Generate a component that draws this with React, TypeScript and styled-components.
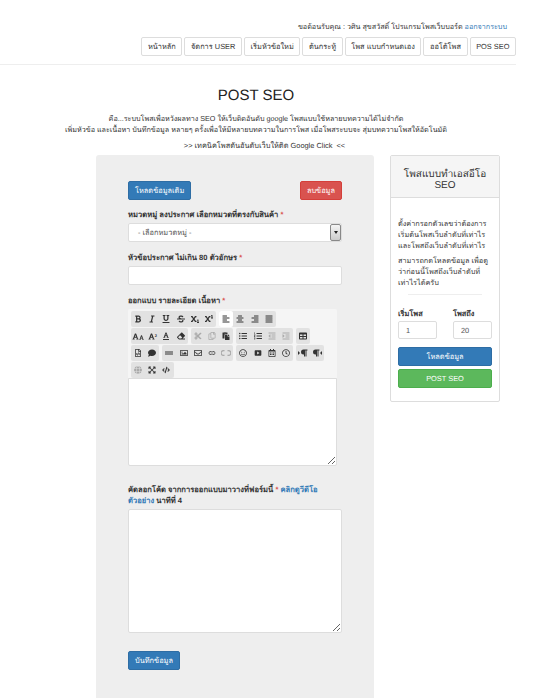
import React from 'react';
import styled, { createGlobalStyle } from 'styled-components';
import {
  FaAlignCenter,
  FaAlignJustify,
  FaAlignLeft,
  FaAlignRight,
  FaBold,
  FaCode,
  FaComment,
  FaCut,
  FaEraser,
  FaExpandArrowsAlt,
  FaFont,
  FaGlobe,
  FaGripLines,
  FaIndent,
  FaItalic,
  FaListOl,
  FaListUl,
  FaOutdent,
  FaParagraph,
  FaPaste,
  FaRegCalendarAlt,
  FaRegClock,
  FaRegCopy,
  FaRegEnvelope,
  FaRegFileCode,
  FaRegImage,
  FaRegSmile,
  FaStrikethrough,
  FaSubscript,
  FaSuperscript,
  FaTable,
  FaUnderline,
} from 'react-icons/fa';
import { MdLink, MdSmartDisplay } from 'react-icons/md';

const GlobalStyle = createGlobalStyle`
  html, body {
    margin: 0;
    height: 698px;
    overflow: hidden;
    background: #fff;
  }
  body {
    font-family: "Liberation Sans", "Noto Sans", sans-serif;
    font-size: 7.4px;
    line-height: 11px;
    color: #333;
  }
  * {
    text-rendering: geometricPrecision;
  }
`;

const FontSizeIcon = () => (
  <IconPair>
    <FaFont size={7} />
    <FaFont size={5} />
  </IconPair>
);

const FontRaiseIcon = () => (
  <IconPair>
    <FaFont size={7} />
    <RaisedDigit>2</RaisedDigit>
  </IconPair>
);

const FontColorIcon = () => (
  <UnderlinedIcon>
    <FaFont size={6} />
  </UnderlinedIcon>
);

const LtrIcon = () => (
  <IconPair>
    <Caret $dir="right" />
    <FaParagraph size={8} />
  </IconPair>
);

const RtlIcon = () => (
  <IconPair>
    <FaParagraph size={8} />
    <Caret $dir="left" />
  </IconPair>
);

const UnlinkIcon = () => (
  <svg width="10" height="6" viewBox="0 0 10 6" fill="none" stroke="currentColor" strokeWidth="1.1">
    <path d="M3.5 .6H2.6a2.4 2.4 0 0 0 0 4.8h.9M6.5 .6h.9a2.4 2.4 0 0 1 0 4.8h-.9" />
  </svg>
);

type Tool = { icon: React.ComponentType; off?: boolean; active?: boolean };

const NAV_ITEMS = ['หน้าหลัก', 'จัดการ USER', 'เริ่มหัวข้อใหม่', 'ต้นกระทู้', 'โพส แบบกำหนดเอง', 'ออโต้โพส', 'POS SEO'];

const TOOL_ROWS: Tool[][][] = [
  [
    [{ icon: FaBold }, { icon: FaItalic }, { icon: FaUnderline }, { icon: FaStrikethrough }, { icon: FaSubscript }, { icon: FaSuperscript }],
    [{ icon: FaAlignLeft, active: true }, { icon: FaAlignCenter }, { icon: FaAlignRight }, { icon: FaAlignJustify }],
  ],
  [
    [{ icon: FontSizeIcon }, { icon: FontRaiseIcon }, { icon: FontColorIcon }, { icon: FaEraser }],
    [{ icon: FaCut, off: true }, { icon: FaRegCopy, off: true }, { icon: FaPaste }],
    [{ icon: FaListUl }, { icon: FaListOl }, { icon: FaOutdent, off: true }, { icon: FaIndent, off: true }],
    [{ icon: FaTable }],
  ],
  [
    [{ icon: FaRegFileCode }, { icon: FaComment }],
    [{ icon: FaGripLines }, { icon: FaRegImage }, { icon: FaRegEnvelope }, { icon: MdLink }, { icon: UnlinkIcon, off: true }],
    [{ icon: FaRegSmile }, { icon: MdSmartDisplay }, { icon: FaRegCalendarAlt }, { icon: FaRegClock }],
    [{ icon: LtrIcon }, { icon: RtlIcon }],
  ],
  [[{ icon: FaGlobe, off: true }, { icon: FaExpandArrowsAlt }, { icon: FaCode }]],
];

export default function App() {
  return (
    <>
      <GlobalStyle />
      <Header>
        <Greeting>
          ขอต้อนรับคุณ : วศิน สุขสวัสดิ์ โปรแกรมโพสเว็บบอร์ด <Link>ออกจากระบบ</Link>
        </Greeting>
        <Nav>
          {NAV_ITEMS.map((item) => (
            <NavButton key={item}>{item}</NavButton>
          ))}
        </Nav>
      </Header>
      <Intro>
        <Title>POST SEO</Title>
        <Description>
          คือ...ระบบโพสเพื่อหวังผลทาง SEO ให้เว็บติดอันดับ google โพสแบบใช้หลายบทความได้ไม่จำกัด
          <br />
          เพิ่มหัวข้อ และเนื้อหา บันทึกข้อมูล หลายๆ ครั้งเพื่อให้มีหลายบทความในการโพส เมื่อโพสระบบจะ สุ่มบทความโพสให้อัตโนมัติ
        </Description>
        <Technique>&gt;&gt; เทคนิคโพสดันอันดับเว็บให้ติด Google Click &nbsp;&lt;&lt;</Technique>
      </Intro>
      <Main>
        <FormPanel>
          <TopActions>
            <Button $color="blue">โหลดข้อมูลเดิม</Button>
            <Button $color="red">ลบข้อมูล</Button>
          </TopActions>
          <Label $top={9}>
            หมวดหมู่ ลงประกาศ เลือกหมวดที่ตรงกับสินค้า <Required>*</Required>
          </Label>
          <SelectBox>
            <SelectText>- เลือกหมวดหมู่ -</SelectText>
            <SelectArrow />
          </SelectBox>
          <Label $top={10}>
            หัวข้อประกาศ ไม่เกิน 80 ตัวอักษร <Required>*</Required>
          </Label>
          <TextInput />
          <Label $top={10}>
            ออกแบบ รายละเอียด เนื้อหา <Required>*</Required>
          </Label>
          <Editor>
            <Toolbar>
              {TOOL_ROWS.map((row, rowIndex) => (
                <ToolRow key={rowIndex}>
                  {row.map((group, groupIndex) => (
                    <ToolGroupBox key={groupIndex}>
                      {group.map(({ icon: Icon, off, active }, toolIndex) => (
                        <ToolButton key={toolIndex} $off={off} $active={active}>
                          <Icon />
                        </ToolButton>
                      ))}
                    </ToolGroupBox>
                  ))}
                </ToolRow>
              ))}
            </Toolbar>
            <EditorArea />
          </Editor>
          <Label $top={18}>
            คัดลอกโค้ด จากการออกแบบมาวางที่ฟอร์มนี้ <Required>*</Required> <Link>คลิกดูวีดีโอตัวอย่าง</Link> นาทีที่ 4
          </Label>
          <CodeArea />
          <SaveRow>
            <Button $color="blue">บันทึกข้อมูล</Button>
          </SaveRow>
        </FormPanel>
        <SidePanel>
          <SideHeader>โพสแบบทำเอสอีโอ SEO</SideHeader>
          <SideBody>
            <SideText>ตั้งค่ากรอกตัวเลขว่าต้องการเริ่มต้นโพสเว็บลำดับที่เท่าไร และโพสถึงเว็บลำดับที่เท่าไร</SideText>
            <SideText>สามารถกดโหลดข้อมูล เพื่อดูว่าก่อนนี้โพสถึงเว็บลำดับที่เท่าไรได้ครับ</SideText>
            <SideRule />
            <RangeRow>
              <RangeField>
                <RangeLabel>เริ่มโพส</RangeLabel>
                <RangeInput defaultValue="1" />
              </RangeField>
              <RangeField>
                <RangeLabel>โพสถึง</RangeLabel>
                <RangeInput defaultValue="20" />
              </RangeField>
            </RangeRow>
            <SideButtons>
              <Button $color="blue" $block>
                โหลดข้อมูล
              </Button>
              <Button $color="green" $block>
                POST SEO
              </Button>
            </SideButtons>
          </SideBody>
        </SidePanel>
      </Main>
    </>
  );
}

const Header = styled.header`
  width: 516px;
  height: 65px;
  box-sizing: border-box;
  padding-top: 21px;
  border-bottom: 1px solid #eee;
`;

const Greeting = styled.div`
  padding-right: 9px;
  text-align: right;
  font-size: 7.2px;
  line-height: 12px;
`;

const Link = styled.a`
  color: #337ab7;
`;

const Nav = styled.nav`
  display: flex;
  justify-content: flex-end;
  gap: 2px;
  margin-top: 4px;
`;

const NavButton = styled.button`
  height: 19px;
  padding: 0 5.6px;
  border: 1px solid #ddd;
  border-radius: 2px;
  background: #fff;
  color: #333;
  font: 7.4px "Liberation Sans", "Noto Sans", sans-serif;
`;

const Intro = styled.section`
  width: 512px;
  text-align: center;
`;

const Title = styled.h1`
  margin: 21px 0 0;
  font-size: 15px;
  line-height: 19px;
  font-weight: 400;
  color: #222;
`;

const Description = styled.p`
  margin: 8px 0 0;
  font-size: 7.2px;
  line-height: 11px;
`;

const Technique = styled.p`
  margin: 5px 0 0;
  padding-left: 17px;
  font-size: 7.4px;
  line-height: 11px;
`;

const Main = styled.main`
  display: flex;
  align-items: flex-start;
  gap: 16px;
  margin-top: 4px;
  padding-left: 96px;
`;

const FormPanel = styled.div`
  width: 278px;
  height: 600px;
  box-sizing: border-box;
  padding: 26px 32px 0;
  border-radius: 3px;
  background: #eee;
`;

const TopActions = styled.div`
  display: flex;
  justify-content: space-between;
`;

const BUTTON_COLORS = {
  blue: { fill: '#337ab7', line: '#2e6da4' },
  red: { fill: '#d9534f', line: '#d43f3a' },
  green: { fill: '#5cb85c', line: '#4cae4c' },
};

const Button = styled.button<{ $color: keyof typeof BUTTON_COLORS; $block?: boolean }>`
  width: ${({ $block }) => ($block ? '100%' : 'auto')};
  height: 19px;
  padding: 0 6px;
  border: 1px solid ${({ $color }) => BUTTON_COLORS[$color].line};
  border-radius: 2px;
  background: ${({ $color }) => BUTTON_COLORS[$color].fill};
  color: #fff;
  font: 7.4px "Liberation Sans", "Noto Sans", sans-serif;
`;

const Label = styled.label<{ $top: number }>`
  display: block;
  margin: ${({ $top }) => $top}px 0 3px;
  font-size: 7.6px;
  line-height: 11px;
  font-weight: 700;
`;

const Required = styled.span`
  color: #d9534f;
`;

const SelectBox = styled.div`
  display: flex;
  height: 19px;
  box-sizing: border-box;
  border: 1px solid #ddd;
  border-radius: 2px;
  background: #fff;
`;

const SelectText = styled.span`
  flex: 1;
  padding-left: 9px;
  line-height: 17px;
  color: #555;
`;

const SelectArrow = styled.span`
  width: 9px;
  border: 1px solid #888;
  border-radius: 2px;
  background: linear-gradient(#f4f4f4, #ccc);
  display: flex;
  align-items: center;
  justify-content: center;

  &::after {
    content: '';
    border: 2.5px solid transparent;
    border-top: 3px solid #222;
    border-bottom: 0;
  }
`;

const TextInput = styled.input`
  display: block;
  width: 100%;
  height: 19px;
  box-sizing: border-box;
  border: 1px solid #ddd;
  border-radius: 2px;
  background: #fff;
`;

const Editor = styled.div`
  width: 209px;
`;

const Toolbar = styled.div`
  box-sizing: border-box;
  height: 69px;
  padding: 2px 3px 0;
  border-radius: 2px 2px 0 0;
  background: #f5f5f5;
`;

const ToolRow = styled.div`
  display: flex;
  gap: 3px;
  height: 17px;
`;

const ToolGroupBox = styled.div`
  display: flex;
  height: 16px;
  border-radius: 2px;
  background: #e2e2e2;
`;

const ToolButton = styled.span<{ $off?: boolean; $active?: boolean }>`
  display: flex;
  align-items: center;
  justify-content: center;
  width: 14.2px;
  border-radius: 2px;
  background: ${({ $active }) => ($active ? '#fff' : 'transparent')};
  color: ${({ $off }) => ($off ? '#aaa' : '#333')};
  font-size: 8px;
`;

const IconPair = styled.span`
  display: flex;
  align-items: flex-end;
`;

const RaisedDigit = styled.span`
  align-self: flex-start;
  font-size: 4px;
  line-height: 5px;
  font-weight: 700;
`;

const UnderlinedIcon = styled.span`
  display: flex;
  padding-bottom: 1px;
  border-bottom: 1px solid currentColor;
`;

const Caret = styled.span<{ $dir: 'left' | 'right' }>`
  align-self: center;
  border: 2px solid transparent;
  ${({ $dir }) => ($dir === 'right' ? 'border-left: 2px solid currentColor; border-right: 0;' : 'border-right: 2px solid currentColor; border-left: 0;')}
`;

const EditorArea = styled.textarea`
  display: block;
  width: 100%;
  height: 88px;
  box-sizing: border-box;
  margin: 0;
  border: 1px solid #ddd;
  border-radius: 0 0 2px 2px;
  background: #fff;
`;

const CodeArea = styled.textarea`
  display: block;
  width: 100%;
  height: 124px;
  box-sizing: border-box;
  margin: 0;
  border: 1px solid #ddd;
  border-radius: 2px;
  background: #fff;
`;

const SaveRow = styled.div`
  margin-top: 18px;
`;

const SidePanel = styled.aside`
  width: 110px;
  height: 247px;
  box-sizing: border-box;
  border: 1px solid #ddd;
  border-radius: 2px;
  background: #fff;
`;

const SideHeader = styled.div`
  height: 42px;
  box-sizing: border-box;
  padding: 13px 12px 0;
  border-bottom: 1px solid #ddd;
  background: #f5f5f5;
  text-align: center;
  font-size: 10px;
  line-height: 11px;
  color: #333;
`;

const SideBody = styled.div`
  padding: 20px 7px 0;
`;

const SideText = styled.p`
  margin: 0 0 4px;
  font-size: 7.3px;
  line-height: 11px;
`;

const SideRule = styled.hr`
  width: 74px;
  margin: 6px auto 13px;
  border: 0;
  border-top: 1px solid #eee;
`;

const RangeRow = styled.div`
  display: flex;
  justify-content: space-between;
`;

const RangeField = styled.div`
  width: 39px;
`;

const RangeLabel = styled.div`
  margin-bottom: 2px;
  font-weight: 700;
  line-height: 11px;
`;

const RangeInput = styled.input`
  display: block;
  width: 100%;
  height: 18px;
  box-sizing: border-box;
  padding: 0 7px;
  border: 1px solid #ddd;
  border-radius: 2px;
  color: #555;
  font: 7.4px "Liberation Sans", "Noto Sans", sans-serif;
`;

const SideButtons = styled.div`
  display: flex;
  flex-direction: column;
  gap: 3px;
  margin-top: 8px;
`;
